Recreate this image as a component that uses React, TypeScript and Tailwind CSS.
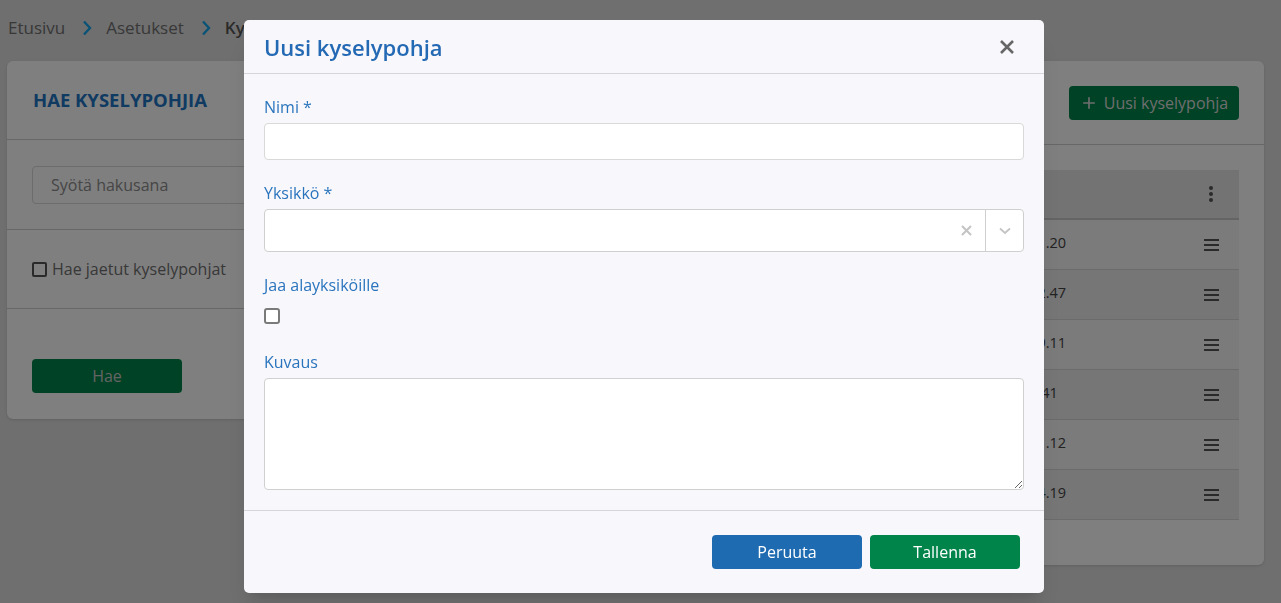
import { Plus } from "lucide-react";

const rows = [
  { date: "14.3.2024 1.20", color: "text-[#444]" },
  { date: "2.2.2024 12.47", color: "text-[#444]" },
  { date: "8.11.2023 9.11", color: "text-[#444]" },
  { date: "1.9.2023 8.41", color: "text-[#444]" },
  { date: "22.5.2023 1.12", color: "text-[#444]" },
  { date: "10.1.2023 4.19", color: "text-[#444]" },
];

function Hamburger() {
  return (
    <div className="flex flex-col gap-[3px] w-[15px]">
      <span className="h-[2px] bg-[#555]" />
      <span className="h-[2px] bg-[#555]" />
      <span className="h-[2px] bg-[#555]" />
    </div>
  );
}

function Chevron() {
  return (
    <svg width="10" height="16" viewBox="0 0 10 16" className="ml-[17px] mr-[14px] mt-[1px]">
      <path d="M2 1.5l6 6.5-6 6.5" fill="none" stroke="#14a6ec" strokeWidth="2.4" />
    </svg>
  );
}

function Background() {
  return (
    <div className="min-h-screen bg-[#dedede] pl-[7px] pr-[17px]">
      <div className="h-[61px] flex items-center pb-[6px] pl-[1px] text-[17px] text-[#707070]">
        <span>Etusivu</span>
        <Chevron />
        <span>Asetukset</span>
        <Chevron />
        <span className="font-semibold text-[#555]">Kyselypohjat</span>
      </div>
      <div className="flex gap-[12px] items-start">
        <div className="w-[420px] bg-white rounded-md shadow-sm">
          <div className="h-[79px] flex items-center px-[26px] border-b border-[#cfcfcf]">
            <h2 className="text-[18.5px] font-bold text-[#1f74c4]">HAE KYSELYPOHJIA</h2>
          </div>
          <div className="px-[25px] pt-[26px] pb-[25px] border-b border-[#cfcfcf]">
            <div className="h-[38px] rounded border border-[#d8d8d8] bg-white flex items-center px-[18px] text-[16px] text-[#8c8c8c]">
              Syötä hakusana
            </div>
          </div>
          <div className="h-[79px] flex items-center pl-[25px] border-b border-[#cfcfcf] text-[16px] text-[#707070]">
            <span className="w-[15px] h-[15px] rounded-[2px] border-2 border-[#555] mr-[5px] bg-white" />
            Hae jaetut kyselypohjat
          </div>
          <div className="px-[25px] pt-[50px] pb-[26px]">
            <button className="w-[150px] h-[34px] rounded bg-[#00844a] text-[#c8c8c8] text-[16px]">Hae</button>
          </div>
        </div>
        <div className="flex-1 bg-white rounded-md shadow-sm pb-[45px]">
          <div className="h-[84px] flex items-center justify-end pr-[25px] border-b border-[#cfcfcf]">
            <button className="h-[34px] w-[170px] rounded bg-[#00844a] text-[#dcdcdc] text-[16px] flex items-center justify-center gap-[6px]">
              <Plus size={18} strokeWidth={2.2} />
              Uusi kyselypohja
            </button>
          </div>
          <div className="pt-[25px] pr-[25px] pl-[25px]">
            <div className="h-[50px] bg-[#e6e6e6] border-b-2 border-[#c8c8c8] flex items-center justify-end pr-[26px]">
              <div className="flex flex-col gap-[2px]">
                <span className="w-[4px] h-[4px] rounded-full bg-[#555]" />
                <span className="w-[4px] h-[4px] rounded-full bg-[#555]" />
                <span className="w-[4px] h-[4px] rounded-full bg-[#555]" />
              </div>
            </div>
            {rows.map((r, i) => (
              <div
                key={i}
                className={`h-[50px] flex items-center border-b border-[#d6d6d6] ${i % 2 === 0 ? "bg-[#f6f6f6]" : "bg-[#ececec]"}`}
              >
                <span className="flex-1" />
                <span className={`w-[140px] text-[14.5px] -mt-[4px] ${r.color}`}>{r.date}</span>
                <span className="w-[131px] flex justify-end pr-[20px]">
                  <Hamburger />
                </span>
              </div>
            ))}
          </div>
        </div>
      </div>
    </div>
  );
}

export default function App() {
  return (
    <div className="relative min-h-screen overflow-hidden" style={{ fontFamily: '"Open Sans", "Noto Sans", sans-serif' }}>
      <Background />
      <div className="fixed inset-0 bg-black/50 flex justify-center items-start">
        <div className="mt-[20px] ml-[7px] w-[800px] h-[573px] bg-[#f8f8fc] rounded-[5px] shadow-xl flex flex-col">
          <div className="h-[54px] flex items-center justify-between px-[20px] border-b border-[#d6d6d9]">
            <h1 className="text-[22px] font-semibold text-[#2469b3] mt-[1px]">Uusi kyselypohja</h1>
            <svg width="16" height="16" viewBox="0 0 16 16" className="mr-[9px]">
              <path d="M2 2l12 12M14 2L2 14" stroke="#666" strokeWidth="2.6" />
            </svg>
          </div>
          <div className="px-[20px] pt-[21px] pb-[20px] border-b border-[#d6d6d9] flex-1">
            <label className="block text-[16px] leading-[24px] text-[#2a74bd] mb-[4px]">Nimi *</label>
            <input className="block w-full h-[37px] rounded bg-white border border-[#d9d9d9] outline-none" />
            <label className="block text-[16px] leading-[24px] text-[#2a74bd] mt-[21px] mb-[4px]">Yksikkö *</label>
            <div className="h-[43px] rounded bg-white border border-[#cfcfcf] flex items-center">
              <span className="flex-1" />
              <svg width="11" height="11" viewBox="0 0 11 11" className="mr-[13px]">
                <path d="M1 1l9 9M10 1l-9 9" stroke="#c4c4c4" strokeWidth="2" />
              </svg>
              <span className="w-px h-full bg-[#cfcfcf]" />
              <span className="w-[37px] flex justify-center">
                <svg width="12" height="8" viewBox="0 0 12 8">
                  <path d="M1 1.5l5 4.5 5-4.5" fill="none" stroke="#c4c4c4" strokeWidth="1.8" />
                </svg>
              </span>
            </div>
            <label className="block text-[16px] leading-[24px] text-[#2a74bd] mt-[21px]">Jaa alayksiköille</label>
            <span className="block w-[16px] h-[16px] mt-[11px] rounded-[3px] border-2 border-[#7a7a7a] bg-white" />
            <label className="block text-[16px] leading-[24px] text-[#2a74bd] mt-[26px] mb-[4px]">Kuvaus</label>
            <textarea className="block w-full h-[112px] rounded bg-white border border-[#d0d0d0] outline-none" />
          </div>
          <div className="h-[82px] flex items-center justify-end gap-[8px] pr-[24px]">
            <button className="w-[150px] h-[34px] rounded bg-[#1e6bb1] text-white text-[16px]">Peruuta</button>
            <button className="w-[150px] h-[34px] rounded bg-[#00844a] text-white text-[16px]">Tallenna</button>
          </div>
        </div>
      </div>
    </div>
  );
}
